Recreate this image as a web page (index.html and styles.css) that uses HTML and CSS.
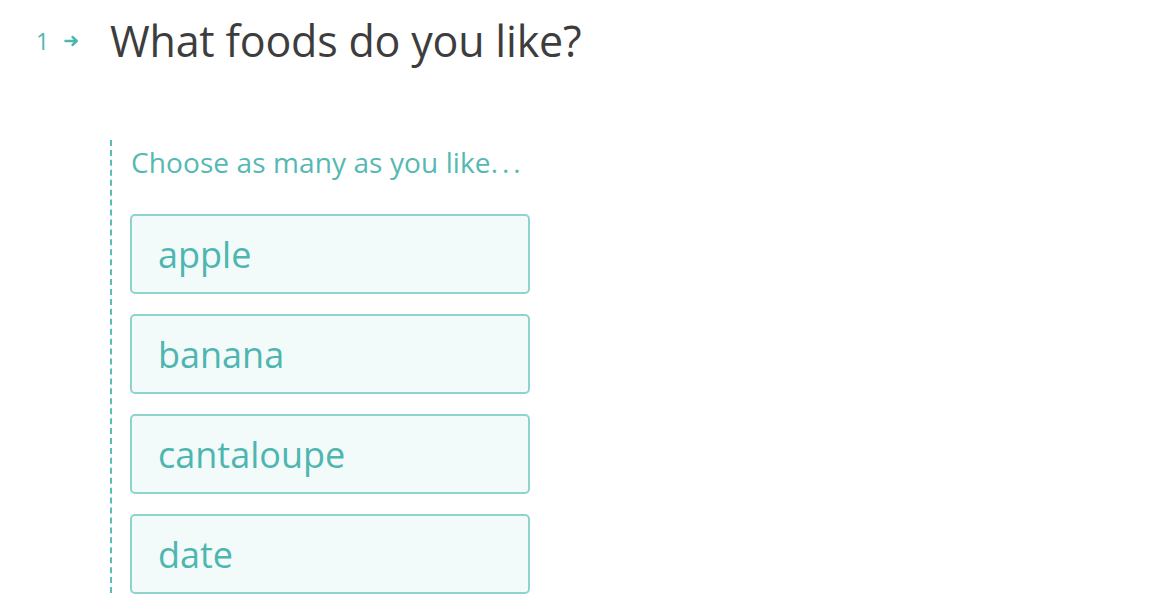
FILE: index.html
```html
<!DOCTYPE html>
<html>
<head>
<meta charset="utf-8">
<link rel="stylesheet" href="styles.css">
</head>
<body>
<div class="question">
  <div class="counter">
    <span class="num">1</span>
    <svg class="arrow" width="16" height="12" viewBox="0 0 16 12"><path d="M1.5 6H12.5M8.5 2L12.8 6L8.5 10" fill="none" stroke="#4db6b0" stroke-width="2.4" stroke-linecap="round" stroke-linejoin="round"/></svg>
  </div>
  <h1 class="title">What foods do you like?</h1>
</div>
<div class="answers">
  <div class="hint">Choose as many as you like<span class="dots">...</span></div>
  <div class="choices">
    <div class="choice">apple</div>
    <div class="choice">banana</div>
    <div class="choice">cantaloupe</div>
    <div class="choice">date</div>
  </div>
</div>
</body>
</html>
```
FILE: styles.css
```css
html, body {
  margin: 0;
  padding: 0;
  background: #ffffff;
}
body {
  font-family: "Open Sans", "Lato", sans-serif;
  width: 1160px;
  height: 610px;
  overflow: hidden;
}
.question {
  display: flex;
  align-items: center;
  padding: 14px 0 0 36px;
  height: 54px;
}
.counter {
  display: flex;
  align-items: center;
  width: 74px;
  color: #4db6b0;
}
.num {
  font-size: 23px;
  margin-right: 15px;
}
.arrow {
  display: block;
}
.title {
  margin: 0;
  font-size: 43px;
  line-height: 54px;
  font-weight: 400;
  color: #3d3d3d;
  letter-spacing: -0.2px;
}
.answers {
  margin: 72px 0 0 110px;
  border-left: 2px dashed #5cbcb6;
  padding: 4px 0 0 18px;
  height: 449px;
}
.hint {
  font-size: 28px;
  color: #55b9b3;
  height: 36px;
  line-height: 36px;
  padding-left: 1px;
  letter-spacing: 0.1px;
}
.dots {
  letter-spacing: 4px;
}
.choices {
  margin-top: 34px;
  display: flex;
  flex-direction: column;
  gap: 20px;
}
.choice {
  box-sizing: border-box;
  width: 400px;
  height: 80px;
  border: 2px solid #8dd3ce;
  border-radius: 5px;
  background: #f3fafa;
  color: #4db6b0;
  font-size: 36px;
  padding-left: 26px;
  display: flex;
  align-items: center;
}
```
